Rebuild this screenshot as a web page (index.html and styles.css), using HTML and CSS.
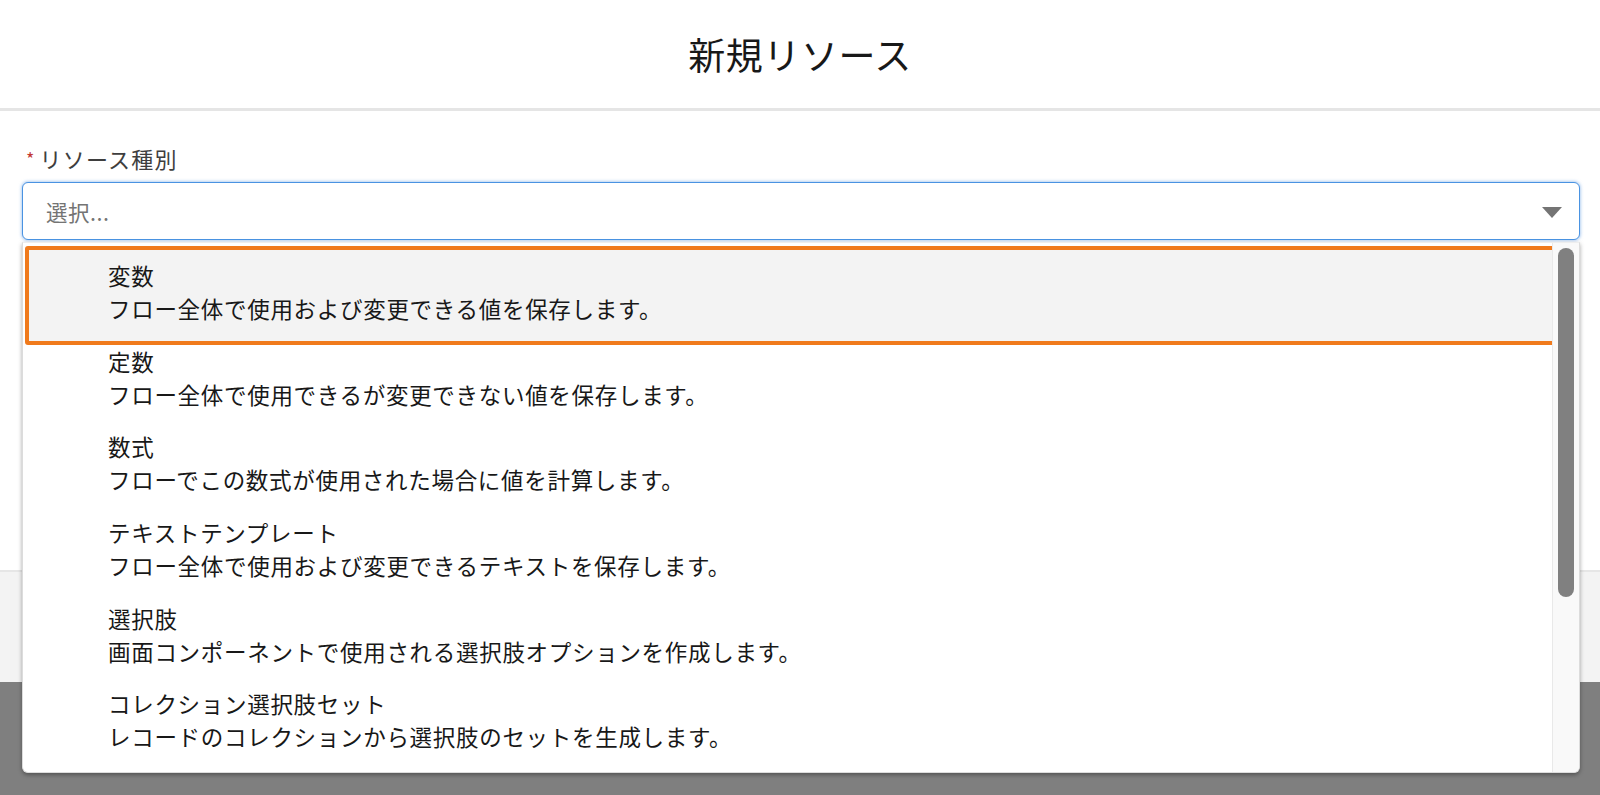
FILE: index.html
```html
<!DOCTYPE html>
<html lang="ja">
<head>
<meta charset="utf-8">
<title>新規リソース</title>
<link rel="stylesheet" href="styles.css">
</head>
<body>
<div class="page">
  <header class="modal-header">
    <h1 class="modal-title">新規リソース</h1>
  </header>
  <main class="modal-body">
    <label class="field-label"><span class="required">*</span>リソース種別</label>
    <div class="combobox">
      <div class="combo-input">
        <span class="placeholder">選択...</span>
        <svg class="combo-arrow" width="20" height="11" viewBox="0 0 20 11"><polygon points="0,0 20,0 10,11" fill="#747474"/></svg>
      </div>
      <div class="dropdown">
        <ul class="option-list">
          <li class="option is-active">
            <span class="option-title">変数</span>
            <span class="option-desc">フロー全体で使用および変更できる値を保存します。</span>
          </li>
          <li class="option">
            <span class="option-title">定数</span>
            <span class="option-desc">フロー全体で使用できるが変更できない値を保存します。</span>
          </li>
          <li class="option">
            <span class="option-title">数式</span>
            <span class="option-desc">フローでこの数式が使用された場合に値を計算します。</span>
          </li>
          <li class="option">
            <span class="option-title">テキストテンプレート</span>
            <span class="option-desc">フロー全体で使用および変更できるテキストを保存します。</span>
          </li>
          <li class="option">
            <span class="option-title">選択肢</span>
            <span class="option-desc">画面コンポーネントで使用される選択肢オプションを作成します。</span>
          </li>
          <li class="option">
            <span class="option-title">コレクション選択肢セット</span>
            <span class="option-desc">レコードのコレクションから選択肢のセットを生成します。</span>
          </li>
        </ul>
        <div class="scroll-track"><div class="scroll-thumb"></div></div>
      </div>
    </div>
  </main>
  <footer class="modal-footer"></footer>
  <div class="backdrop"></div>
</div>
</body>
</html>
```

FILE: styles.css
```css
* { box-sizing: border-box; }

html, body {
  margin: 0;
  padding: 0;
  height: 100%;
}

body {
  font-family: "Noto Sans CJK JP", "Noto Sans", sans-serif;
  color: #181818;
  background: #7f7f7f;
  overflow: hidden;
}

.page {
  height: 100vh;
  display: flex;
  flex-direction: column;
}

.modal-header {
  height: 111px;
  background: #fff;
  border-bottom: 3px solid #e5e5e5;
  display: flex;
  align-items: center;
  justify-content: center;
}

.modal-title {
  margin: 0;
  font-size: 37px;
  font-weight: 400;
  line-height: 1;
  color: #181818;
  letter-spacing: 0.6px;
}

.modal-body {
  height: 459px;
  background: #fff;
  padding: 34px 20px 0 22px;
}

.field-label {
  display: flex;
  align-items: center;
  height: 26px;
  font-size: 22px;
  line-height: 26px;
  letter-spacing: 1.2px;
  color: #3e3e3e;
  margin-bottom: 11px;
}

.required {
  color: #c23934;
  font-size: 18px;
  margin: 0 4px 0 4px;
}

.combobox {
  position: relative;
}

.combo-input {
  height: 58px;
  border: 1px solid #4a93e2;
  border-radius: 6px;
  box-shadow: 0 0 3px 1px rgba(120, 170, 230, 0.55);
  background: #fff;
  display: flex;
  align-items: center;
  justify-content: space-between;
  padding: 0 17px 0 23px;
}

.placeholder {
  font-size: 21.5px;
  color: #747474;
  letter-spacing: 0.5px;
}

.combo-arrow {
  display: block;
  margin-top: 2px;
}

.dropdown {
  position: absolute;
  left: 0;
  right: 0;
  top: calc(100% + 2px);
  height: 531px;
  background: #fff;
  border: 1px solid #dcdcdc;
  border-top-color: #eeeeee;
  border-radius: 0 0 6px 6px;
  box-shadow: 0 2px 4px rgba(0, 0, 0, 0.35);
  display: flex;
  overflow: hidden;
  z-index: 10;
}

.option-list {
  flex: 1;
  list-style: none;
  margin: 0;
  padding: 6px 0 0 0;
  overflow: hidden;
}

.option {
  display: flex;
  flex-direction: column;
  padding: 9.85px 20px 9.85px 85px;
  font-size: 22.5px;
  line-height: 33px;
  letter-spacing: 0.7px;
  color: #181818;
}

.option.is-active {
  position: relative;
  z-index: 0;
}

.option.is-active::before {
  content: "";
  position: absolute;
  top: -3px;
  bottom: -10px;
  left: 2px;
  right: -6px;
  background: #f3f3f3;
  border: 4px solid #f07a1c;
  border-radius: 3px;
  z-index: -1;
}

.scroll-track {
  width: 27px;
  background: #f9f9f9;
  border-left: 1px solid #e9e9e9;
  padding: 5px 0 0 5px;
}

.scroll-thumb {
  width: 16px;
  height: 349px;
  background: #808080;
  border-radius: 8px;
}

.modal-footer {
  height: 112px;
  background: #f3f3f3;
  border-top: 2px solid #e6e6e6;
}

.backdrop {
  flex: 1;
  background: #7f7f7f;
}
```
